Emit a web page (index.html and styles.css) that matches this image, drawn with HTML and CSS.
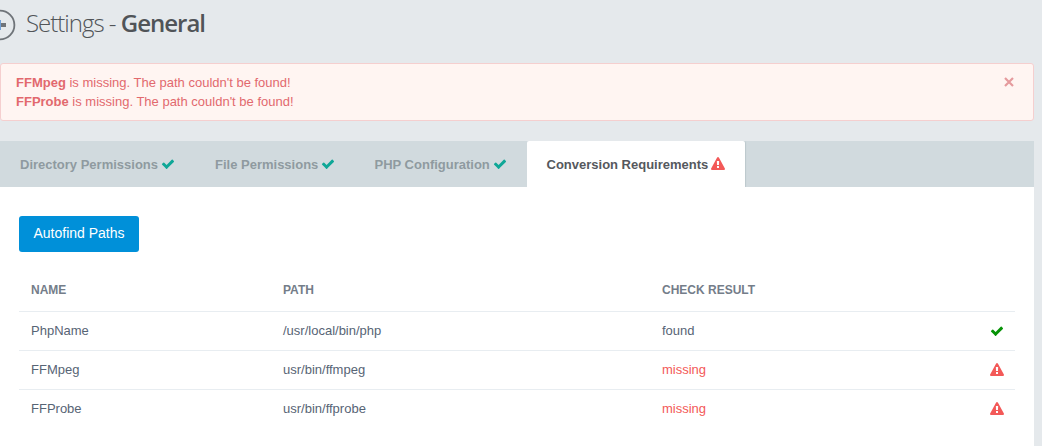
FILE: index.html
```html
<!DOCTYPE html>
<html lang="en">
<head>
<meta charset="utf-8">
<title>Settings - General</title>
<link rel="stylesheet" href="styles.css">
</head>
<body>
<svg class="defs" width="0" height="0">
  <symbol id="check" viewBox="0 0 1792 1792"><path d="M1671 566q0 40-28 68l-724 724-136 136q-28 28-68 28t-68-28l-136-136-362-362q-28-28-28-68t28-68l136-136q28-28 68-28t68 28l294 295 656-657q28-28 68-28t68 28l136 136q28 28 28 68z"/></symbol>
  <symbol id="warning" viewBox="0 0 1792 1792"><path d="M1024 1375v-190q0-14-9.5-23.5t-22.5-9.5h-192q-13 0-22.5 9.5t-9.5 23.5v190q0 14 9.5 23.5t22.5 9.5h192q13 0 22.5-9.5t9.5-23.5zm-2-374l18-459q0-12-10-19-13-11-24-11h-220q-11 0-24 11-10 7-10 21l17 457q0 10 10 16.5t24 6.5h185q14 0 23.5-6.5t10.5-16.5zm-14-934l768 1408q35 63-2 126-17 29-46.5 46t-63.5 17h-1536q-34 0-63.5-17t-46.5-46q-37-63-2-126l768-1408q17-31 47-49t65-18 65 18 47 49z"/></symbol>
</svg>
<header class="page-title">
  <svg class="title-icon" width="16" height="32" viewBox="0 0 16 32"><circle cx="0" cy="16" r="14.4" fill="none" stroke="#6f7479" stroke-width="1.8"/><path d="M0 16h6" stroke="#6f7479" stroke-width="4"/><path d="M0 11v10" stroke="#6fa0d8" stroke-width="2"/></svg>
  <h1 class="title"><span class="title-light">Settings - </span><span class="title-bold">General</span></h1>
</header>
<section class="alert">
  <div><p><b>FFMpeg</b> is missing. The path couldn't be found!</p><p><b>FFProbe</b> is missing. The path couldn't be found!</p></div>
  <svg class="close" width="10" height="10" viewBox="0 0 10 10"><path d="M1 1l8 8M9 1l-8 8" stroke="#e59a9d" stroke-width="2.2"/></svg>
</section>
<main class="panel">
  <nav class="tabs">
    <a class="tab tab-dir">Directory Permissions<svg class="icon ok"><use href="#check"/></svg></a>
    <a class="tab tab-file">File Permissions<svg class="icon ok"><use href="#check"/></svg></a>
    <a class="tab tab-php">PHP Configuration<svg class="icon ok"><use href="#check"/></svg></a>
    <a class="tab active">Conversion Requirements<svg class="icon warn"><use href="#warning"/></svg></a>
  </nav>
  <div class="content">
    <button class="button">Autofind Paths</button>
    <table class="table">
      <colgroup><col class="c-name"><col class="c-path"><col class="c-result"><col></colgroup>
      <thead><tr><th>NAME</th><th>PATH</th><th>CHECK RESULT</th><th></th></tr></thead>
      <tbody>
        <tr><td>PhpName</td><td>/usr/local/bin/php</td><td>found</td><td class="status"><svg class="icon found"><use href="#check"/></svg></td></tr>
        <tr><td>FFMpeg</td><td>usr/bin/ffmpeg</td><td class="missing">missing</td><td class="status"><svg class="icon warn"><use href="#warning"/></svg></td></tr>
        <tr><td>FFProbe</td><td>usr/bin/ffprobe</td><td class="missing">missing</td><td class="status"><svg class="icon warn"><use href="#warning"/></svg></td></tr>
      </tbody>
    </table>
  </div>
</main>
</body>
</html>
```
FILE: styles.css
```css
* { box-sizing: border-box; }
body { margin: 0; height: 446px; overflow: hidden; background: #e5e9ec; color: #576475; font: 13px/19px "Liberation Sans", Arial, sans-serif; display: flex; flex-direction: column; }
.defs { position: absolute; }
.page-title { height: 63px; padding-top: 9px; display: flex; align-items: flex-start; gap: 10px; }
.title-icon { flex: none; }
.title { margin: -3px 0 0; font: 300 24px/34px "Open Sans", sans-serif; letter-spacing: -1px; color: #505458; white-space: pre; }
.title-bold { font-weight: 600; }
.alert { width: 1034px; height: 58px; flex: none; padding: 9px 19px 0 15px; display: flex; justify-content: space-between; border: 1px solid #f5cfcf; border-radius: 3px; background: #fff5f2; color: #e2696e; }
.alert p { margin: 0; }
.close { margin-top: 4px; }
.panel { width: 1034px; flex: 1; margin-top: 20px; background: #fff; }
.tabs { height: 46px; display: flex; background: #d1dade; }
.tab { display: flex; align-items: center; gap: 3px; padding: 0 20px; font-weight: bold; color: #8f9aa0; white-space: nowrap; }
.tab-dir { width: 195px; }
.tab-file { width: 159px; }
.tab-php { width: 173px; padding-left: 20.5px; }
.active { width: 218px; padding-left: 19.5px; border-radius: 2px 2px 0 0; background: #fff; color: #55585d; box-shadow: 1px 0 1px #bcc8cd; clip-path: inset(0 -2px 0 0); }
.icon { width: 14px; height: 14px; flex: none; display: block; }
.ok { fill: #0fa797; }
.warn { fill: #f35958; }
.found { fill: #079307; }
.content { padding: 29px 19px 0; }
.button { display: block; width: 120px; height: 36px; padding: 0 0 2px; border: 0; border-radius: 3px; background: #0090d9; color: #fff; font: 14px/20px "Liberation Sans", Arial, sans-serif; }
.table { width: 996px; margin-top: 16px; table-layout: fixed; border-collapse: separate; border-spacing: 0; }
.c-name { width: 252px; }
.c-path { width: 379px; }
.c-result { width: 327px; }
.table th { height: 43px; padding: 2px 12px 0; text-align: left; font-size: 12px; color: #747d89; }
.table td { height: 39px; padding: 0 12px 2px; border-top: 1px solid #e8edf1; }
.table .missing { color: #f35958; }
.table .status { padding: 0 0 1px; }
.status .icon { margin-left: 12.5px; }
```
